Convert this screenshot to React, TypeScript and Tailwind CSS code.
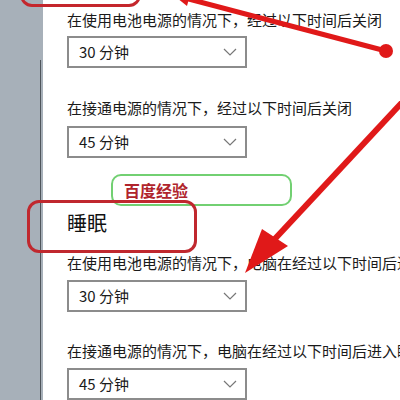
const font = { fontFamily: '"Noto Sans CJK SC", "Noto Sans", sans-serif' };

function Chevron() {
  return (
    <svg width="14" height="8" viewBox="0 0 14 8" fill="none">
      <path d="M1 1 L7 7 L13 1" stroke="#777" strokeWidth="1.2" />
    </svg>
  );
}

function Select({ value, className = "" }: { value: string; className?: string }) {
  return (
    <div
      className={`flex h-[32px] w-[180px] items-center justify-between border-2 border-[#8c8c8c] bg-white pl-[10px] pr-[8px] text-[15px] leading-[20px] text-[#1a1a1a] ${className}`}
    >
      <span>{value}</span>
      <Chevron />
    </div>
  );
}

function Label({ text, className = "" }: { text: string; className?: string }) {
  return <div className={`whitespace-nowrap text-[15px] leading-[20px] text-[#1a1a1a] ${className}`}>{text}</div>;
}

export default function App() {
  return (
    <div className="relative flex h-[400px] w-[400px] overflow-hidden bg-white" style={font}>
      {/* left pane */}
      <div className="flex w-[43px] shrink-0 justify-end bg-[#a7b0b9] pr-[2px]">
        <div className="mt-[60px] w-[1.5px] bg-[#4f555b]" />
      </div>

      {/* settings column */}
      <div className="flex flex-col pl-[24px] pt-[10px]">
        <Label text="在使用电池电源的情况下，经过以下时间后关闭" />
        <Select value="30 分钟" className="mt-[6px]" />
        <Label text="在接通电源的情况下，经过以下时间后关闭" className="mt-[30px]" />
        <Select value="45 分钟" className="mt-[8px]" />
        <div className="mt-[51px] text-[20px] leading-[28px] text-[#111]">睡眠</div>
        <Label text="在使用电池电源的情况下，电脑在经过以下时间后进入睡眠状态" className="mt-[16px]" />
        <Select value="30 分钟" className="mt-[7px]" />
        <Label text="在接通电源的情况下，电脑在经过以下时间后进入睡眠状态" className="mt-[29px]" />
        <Select value="45 分钟" className="mt-[7px]" />
      </div>

      {/* annotations */}
      <div className="absolute left-[20px] top-[-20px] h-[27px] w-[121px] rounded-[12px] border-[3px] border-[#c4262c]" />
      <div className="absolute left-[111px] top-[174px] flex h-[32px] w-[181px] items-center rounded-[10px] border-2 border-[#72d072] bg-white pl-[11px] text-[16px] font-bold leading-[20px] text-[#b0242c]">
        百度经验
      </div>
      <div className="absolute left-[27px] top-[200px] h-[53px] w-[170px] rounded-[12px] border-[3px] border-[#c0282e]" />

      <svg className="absolute left-0 top-0" width="400" height="400" viewBox="0 0 400 400">
        <line x1="386" y1="51" x2="185" y2="-2" stroke="#e01919" strokeWidth="5" />
        <polygon points="193,-16 187,6 152,-22" fill="#e01919" />
        <circle cx="386" cy="51" r="7" fill="#e01919" />
        <line x1="410" y1="94" x2="272" y2="242" stroke="#e01919" strokeWidth="6" />
        <polygon points="245,273 262,229 288,246" fill="#e01919" />
      </svg>
    </div>
  );
}
